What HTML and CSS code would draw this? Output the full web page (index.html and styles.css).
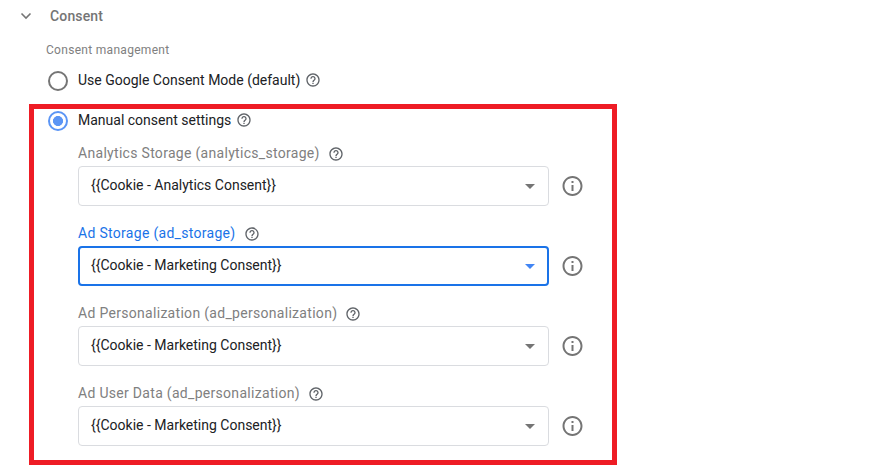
FILE: index.html
```html
<!DOCTYPE html>
<html lang="en">
<head>
<meta charset="utf-8">
<title>Consent</title>
<link rel="stylesheet" href="styles.css">
</head>
<body>
<svg class="defs" aria-hidden="true">
  <symbol id="help" viewBox="0 0 24 24"><path d="M11 18h2v-2h-2v2zm1-16C6.480 2 2 6.480 2 12s4.480 10 10 10 10-4.480 10-10S17.520 2 12 2zm0 18c-4.410 0-8-3.590-8-8s3.590-8 8-8 8 3.590 8 8-3.590 8-8 8zm0-14c-2.210 0-4 1.790-4 4h2c0-1.100.9-2 2-2s2 .9 2 2c0 2-3 1.750-3 5h2c0-2.250 3-2.500 3-5 0-2.210-1.790-4-4-4z"/></symbol>
  <symbol id="info" viewBox="0 0 24 24"><path d="M11 7h2v2h-2zm0 4h2v6h-2zm1-9C6.480 2 2 6.480 2 12s4.480 10 10 10 10-4.480 10-10S17.520 2 12 2zm0 18c-4.410 0-8-3.590-8-8s3.590-8 8-8 8 3.590 8 8-3.590 8-8 8z"/></symbol>
</svg>
<main class="panel">
  <header class="header">
    <svg class="chevron" viewBox="0 0 12 8"><path d="M1.500 1.500 6 6l4.500-4.500"/></svg>
    <h1 class="title">Consent</h1>
  </header>
  <p class="caption">Consent management</p>
  <div class="option"><span class="radio"></span><span class="option-text">Use Google Consent Mode (default)</span><svg class="help"><use href="#help"/></svg></div>
  <div class="option"><span class="radio checked"></span><span class="option-text">Manual consent settings</span><svg class="help"><use href="#help"/></svg></div>
  <section class="fields">
    <div class="field">
      <div class="label"><span>Analytics Storage (analytics_storage)</span><svg class="help"><use href="#help"/></svg></div>
      <div class="control"><div class="select"><span>{{Cookie - Analytics Consent}}</span><i class="arrow"></i></div><svg class="info"><use href="#info"/></svg></div>
    </div>
    <div class="field focused">
      <div class="label"><span>Ad Storage (ad_storage)</span><svg class="help"><use href="#help"/></svg></div>
      <div class="control"><div class="select"><span>{{Cookie - Marketing Consent}}</span><i class="arrow"></i></div><svg class="info"><use href="#info"/></svg></div>
    </div>
    <div class="field">
      <div class="label"><span>Ad Personalization (ad_personalization)</span><svg class="help"><use href="#help"/></svg></div>
      <div class="control"><div class="select"><span>{{Cookie - Marketing Consent}}</span><i class="arrow"></i></div><svg class="info"><use href="#info"/></svg></div>
    </div>
    <div class="field">
      <div class="label"><span>Ad User Data (ad_personalization)</span><svg class="help"><use href="#help"/></svg></div>
      <div class="control"><div class="select"><span>{{Cookie - Marketing Consent}}</span><i class="arrow"></i></div><svg class="info"><use href="#info"/></svg></div>
    </div>
  </section>
  <div class="highlight"></div>
</main>
</body>
</html>
```
FILE: styles.css
```css
* { box-sizing: border-box; }
body { margin: 0; background: #fff; font-family: Roboto, "Liberation Sans", sans-serif; font-size: 14px; color: #202124; }
.defs { display: none; }
.panel { position: relative; height: 475px; overflow: hidden; }
.header { display: flex; align-items: center; height: 32px; padding-left: 20px; }
.chevron { width: 12px; height: 8px; margin-right: 18px; margin-top: -1px; fill: none; stroke: #757575; stroke-width: 1.6; }
.title { margin: 0; font-size: 14px; font-weight: 500; line-height: 20px; letter-spacing: .15px; color: #757575; }
.caption { margin: 8px 0 11px 46px; font-size: 12px; line-height: 20px; height: 20px; letter-spacing: .3px; color: #808080; }
.option { display: flex; align-items: center; height: 20px; margin: 0 0 20px 48px; }
.option + .option { margin-bottom: 0; }
.radio { width: 20px; height: 20px; margin-right: 10px; border: 2px solid #757575; border-radius: 50%; }
.radio.checked { border-color: #5b95f5; background: radial-gradient(circle, #5b95f5 4.7px, transparent 5.3px); }
.option-text { line-height: 20px; margin-top: -2px; }
.help { width: 16px; height: 16px; margin: -2px 0 0 4.5px; fill: #5f6368; }
.fields { margin: 10px 0 0 78px; }
.field { height: 80px; padding-top: 2px; }
.label { display: flex; align-items: center; height: 20px; margin-bottom: 3px; color: #808080; letter-spacing: .3px; line-height: 20px; }
.label .help { margin: 2px 0 0 8px; }
.control { display: flex; align-items: center; }
.select { display: flex; align-items: center; justify-content: space-between; width: 471px; height: 40px; border: 1px solid #dadce0; border-radius: 4px; padding: 0 13px 2px 12px; }
.arrow { width: 0; height: 0; margin-top: 2px; border: 5px solid transparent; border-top-color: #757575; border-bottom: 0; }
.info { width: 24px; height: 24px; margin-left: 11.5px; fill: #757575; }
.info use { transform: translateX(-.5px); }
.focused .label { color: #1a73e8; }
.focused .select { border: 2px solid #1a73e8; padding: 0 12px 2px 11px; }
.focused .arrow { border-top-color: #4285f4; }
.highlight { position: absolute; left: 29px; top: 104px; width: 588px; height: 361px; border: 5px solid #ee1c25; }
```
